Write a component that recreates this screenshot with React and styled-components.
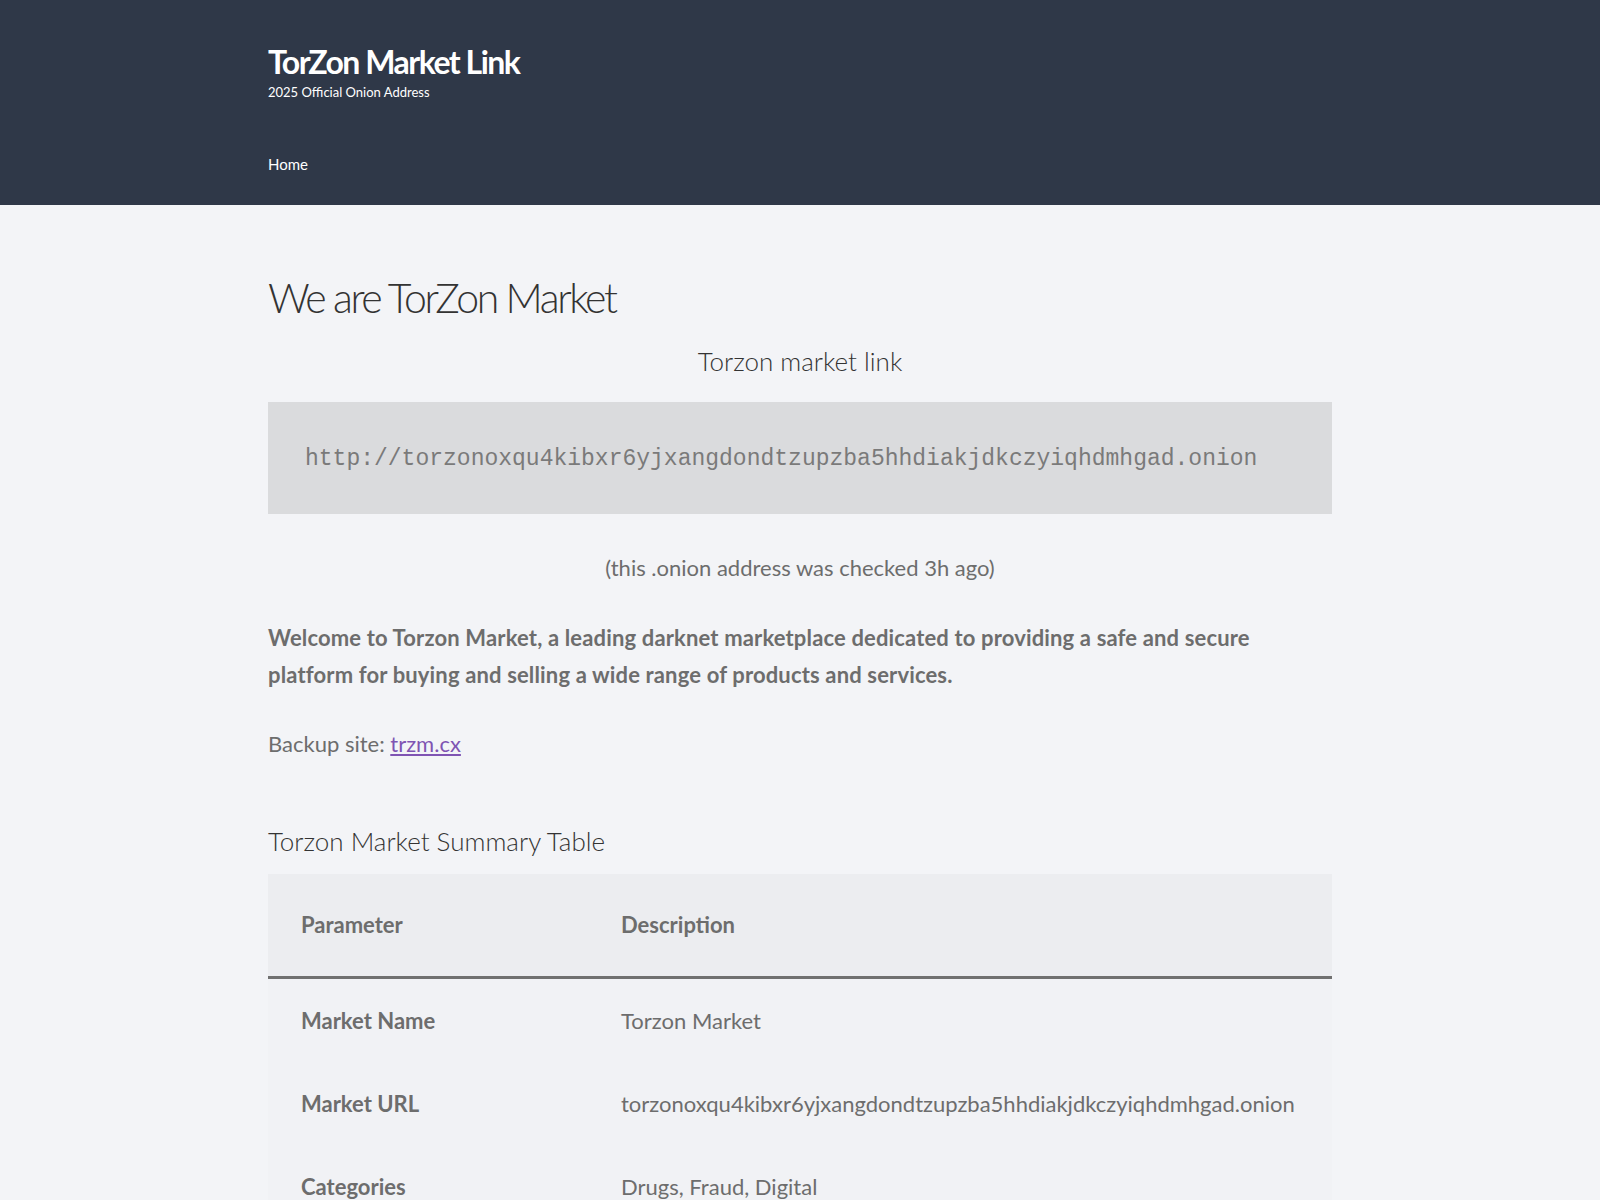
import React from 'react'
import styled, { createGlobalStyle } from 'styled-components'

const GlobalStyle = createGlobalStyle`
body{
    margin:0;
    background:#f3f4f7;
    font-family:Lato, "Noto Sans", sans-serif;
    color:#6d6d6d;
}
`;

const rows = [
    ['Market Name', 'Torzon Market'],
    ['Market URL', 'torzonoxqu4kibxr6yjxangdondtzupzba5hhdiakjdkczyiqhdmhgad.onion'],
    ['Categories', 'Drugs, Fraud, Digital'],
]

function App() {
    return (
        <>
            <GlobalStyle />
            <Header>
                <Inner>
                    <SiteTitle>TorZon Market Link</SiteTitle>
                    <Tagline>2025 Official Onion Address</Tagline>
                    <Nav>
                        <NavLink>Home</NavLink>
                    </Nav>
                </Inner>
            </Header>
            <Main>
                <Inner>
                    <Title>We are TorZon Market</Title>
                    <SubTitle $center>Torzon market link</SubTitle>
                    <Pre>http://torzonoxqu4kibxr6yjxangdondtzupzba5hhdiakjdkczyiqhdmhgad.onion</Pre>
                    <Checked>(this .onion address was checked 3h ago)</Checked>
                    <Lead>
                        Welcome to Torzon Market, a leading darknet marketplace dedicated to providing a safe and secure
                        platform for buying and selling a wide range of products and services.
                    </Lead>
                    <Text>Backup site: <Link href="#">trzm.cx</Link></Text>
                    <SubTitle $table>Torzon Market Summary Table</SubTitle>
                    <Table>
                        <thead>
                            <tr>
                                <Th $first>Parameter</Th>
                                <Th>Description</Th>
                            </tr>
                        </thead>
                        <tbody>
                            {rows.map(([k, v]) => (
                                <tr key={k}>
                                    <Th>{k}</Th>
                                    <Td>{v}</Td>
                                </tr>
                            ))}
                        </tbody>
                    </Table>
                </Inner>
            </Main>
        </>
    )
}

export default App

const Header = styled.header`
background:#2f3848;
padding:42px 0 31px;
`;

const Inner = styled.div`
width:1064px;
margin:0 auto;
`;

const SiteTitle = styled.div`
font-size:32px;
line-height:40px;
font-weight:700;
letter-spacing:-1.5px;
color:#fff;
`;

const Tagline = styled.div`
font-size:13px;
line-height:18px;
margin-top:1px;
color:#fff;
`;

const Nav = styled.nav`
margin-top:53px;
display:flex;
`;

const NavLink = styled.a`
font-size:15px;
line-height:20px;
color:#fff;
`;

const Main = styled.main`
padding-top:66px;
`;

const Title = styled.h1`
margin:0;
font-size:41px;
line-height:53px;
font-weight:300;
color:#333;
letter-spacing:-2.4px;
`;

const SubTitle = styled.h3`
margin:${p => p.$table ? '62px 0 16px' : '20px 0 24px'};
font-size:26px;
line-height:34px;
font-weight:300;
color:#333;
text-align:${p => p.$center ? 'center' : 'left'};
`;

const Pre = styled.pre`
margin:0;
background:#dadbdd;
padding:39px 37px 36px;
font-family:"Liberation Mono", Courier, monospace;
font-size:23px;
line-height:37px;
color:#7a7a7a;
`;

const Checked = styled.p`
margin:35px 0 0;
text-align:center;
font-size:22px;
line-height:37px;
`;

const Lead = styled.p`
margin:33px 0 0;
font-size:22px;
line-height:37px;
font-weight:700;
letter-spacing:0.15px;
`;

const Text = styled.p`
margin:32px 0 0;
font-size:22px;
line-height:37px;
`;

const Link = styled.a`
color:#7f54b3;
`;

const Table = styled.table`
width:100%;
table-layout:fixed;
border-collapse:collapse;
border-spacing:0;
font-size:22px;
line-height:37px;

thead th{
    background:#ecedf0;
    border-bottom:3px solid #707070;
    padding:32px 33px 33px;
}
tbody tr{
    background:#f1f2f5;
}
`;

const Th = styled.th`
box-sizing:border-box;
width:${p => p.$first ? '320px' : 'auto'};
text-align:left;
font-weight:700;
padding:23px 33px;
vertical-align:middle;
`;

const Td = styled.td`
padding:23px 33px;
`;
